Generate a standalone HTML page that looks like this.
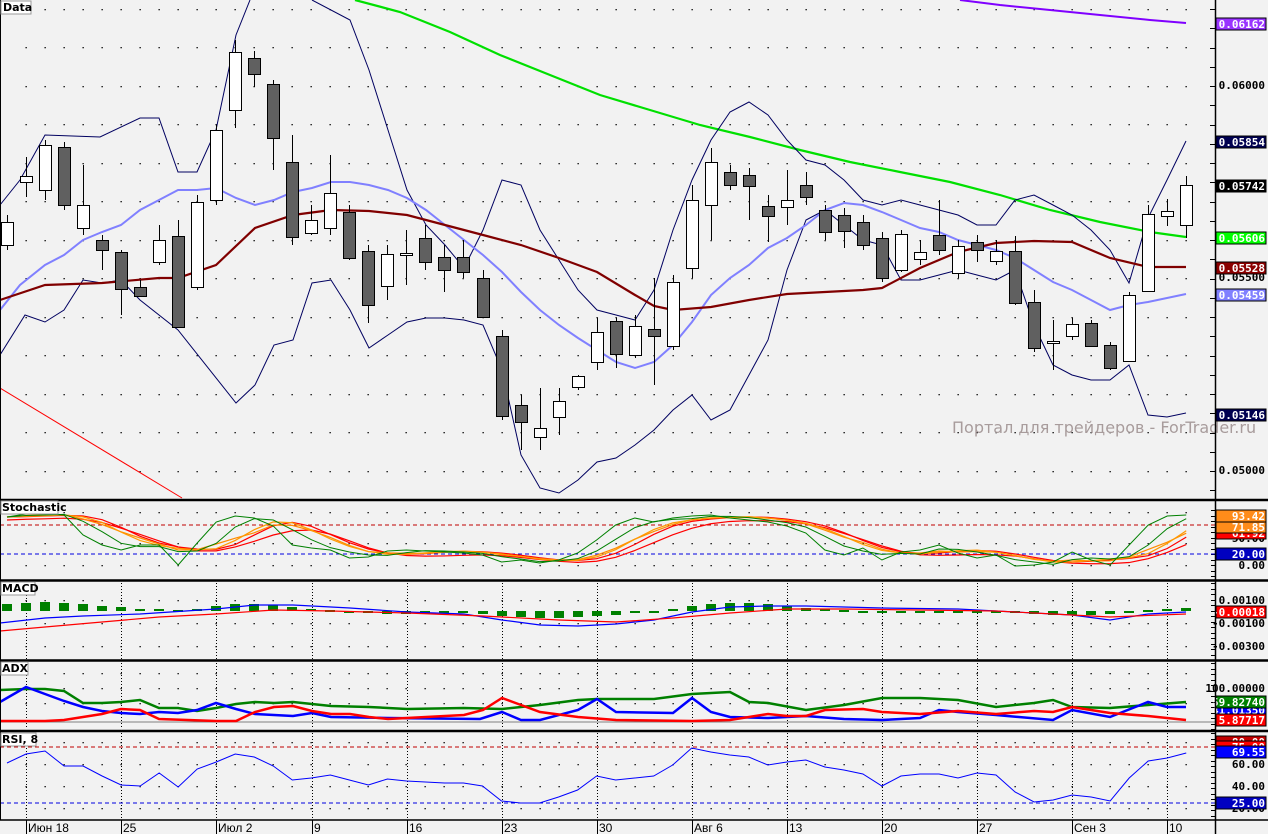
<!DOCTYPE html>
<html><head><meta charset="utf-8"><style>
html,body{margin:0;padding:0;background:#f2f2f2;}
svg{display:block;}
.lb{font-family:"DejaVu Sans Mono","Liberation Mono",monospace;font-weight:bold;font-size:11px;}
.ax{font-family:"Liberation Sans","DejaVu Sans",sans-serif;font-size:12px;fill:#000;}
.tt{font-family:"DejaVu Sans","Liberation Sans",sans-serif;font-weight:bold;font-size:11px;fill:#000;}
</style></head><body>
<svg id="s" width="1268" height="834" viewBox="0 0 1268 834" xmlns="http://www.w3.org/2000/svg">
<rect width="1268" height="834" fill="#f2f2f2"/>
<g id="g"></g>
<text x="952" y="433" font-family="DejaVu Sans, Liberation Sans, sans-serif" font-size="16" fill="#a89c9c">Портал для трейдеров - ForTrader.ru</text>
<g id="labels"></g>
<g stroke="#000" fill="none">
<line x1="1215.5" y1="0" x2="1215.5" y2="834" stroke-width="1.5"/>
<line x1="0" y1="500" x2="1268" y2="500" stroke-width="2.5"/>
<line x1="0" y1="580.5" x2="1268" y2="580.5" stroke-width="2.5"/>
<line x1="0" y1="660.5" x2="1268" y2="660.5" stroke-width="2.5"/>
<line x1="0" y1="731" x2="1268" y2="731" stroke-width="2.5"/>
<line x1="0" y1="820" x2="1268" y2="820" stroke-width="1.5"/>
<line x1="0.5" y1="0" x2="0.5" y2="820"/>
</g>
<g>
<rect x="1" y="1" width="30" height="13" fill="#fff" stroke="#999"/><text class="tt" x="3" y="11">Data</text>
<rect x="1" y="501" width="57" height="13" fill="#fff" stroke="#999"/><text class="tt" x="2" y="511">Stochastic</text>
<rect x="1" y="582" width="34" height="13" fill="#fff" stroke="#999"/><text class="tt" x="2" y="592">MACD</text>
<rect x="1" y="662" width="27" height="13" fill="#fff" stroke="#999"/><text class="tt" x="2" y="672">ADX</text>
<rect x="1" y="733" width="35" height="13" fill="#fff" stroke="#999"/><text class="tt" x="2" y="743">RSI, 8</text>
</g>
<g class="ax">
<text x="28" y="832">Июн 18</text><text x="123" y="832">25</text><text x="218" y="832">Июл 2</text><text x="314" y="832">9</text>
<text x="409" y="832">16</text><text x="504" y="832">23</text><text x="599" y="832">30</text><text x="694" y="832">Авг 6</text>
<text x="789" y="832">13</text><text x="884" y="832">20</text><text x="979" y="832">27</text><text x="1074" y="832">Сен 3</text><text x="1169" y="832">10</text>
</g>
<g stroke="#000"><line x1="26.5" y1="820" x2="26.5" y2="834"/><line x1="121.5" y1="820" x2="121.5" y2="834"/><line x1="216.5" y1="820" x2="216.5" y2="834"/><line x1="312.5" y1="820" x2="312.5" y2="834"/><line x1="407.5" y1="820" x2="407.5" y2="834"/><line x1="502.5" y1="820" x2="502.5" y2="834"/><line x1="597.5" y1="820" x2="597.5" y2="834"/><line x1="692.5" y1="820" x2="692.5" y2="834"/><line x1="787.5" y1="820" x2="787.5" y2="834"/><line x1="882.5" y1="820" x2="882.5" y2="834"/><line x1="977.5" y1="820" x2="977.5" y2="834"/><line x1="1072.5" y1="820" x2="1072.5" y2="834"/><line x1="1167.5" y1="820" x2="1167.5" y2="834"/></g>
</svg>
<script>
(function(){
var NS="http://www.w3.org/2000/svg",g=document.getElementById('g'),L=document.getElementById('labels');
function el(t,a,p){var e=document.createElementNS(NS,t);for(var k in a)e.setAttribute(k,a[k]);(p||g).appendChild(e);return e;}
function X(i){return 7+i*19.02;}
function pl(pts,c,w,d){var s=pts.map(function(p){return p[0]+','+p[1]}).join(' ');var a={points:s,fill:'none',stroke:c,'stroke-width':w||1};if(d)a['stroke-dasharray']=d;el('polyline',a);}
function ser(arr,c,w){pl(arr.map(function(v,i){return [X(i),v]}),c,w);}
function dots(rows){for(var r=0;r<rows.length;r++){for(var i=1;i<63;i++){el('rect',{x:Math.round(X(i))-0.5,y:rows[r],width:1.3,height:1.3,fill:'#000'});}}}
var mr=[];for(var y=8.5;y<500;y+=38.5)mr.push(Math.round(y));dots(mr);
dots([512,543,565]);dots([600,623,646]);dots([673,688,703]);dots([742,764,786,808]);
[26,121,216,312,407,502,597,692,787,882,977,1072,1167].forEach(function(x){
 [[583,659],[663,729],[733,818]].forEach(function(r){el('line',{x1:x+.5,y1:r[0],x2:x+.5,y2:r[1],stroke:'#000','stroke-dasharray':'1,2'});});});
for(var y=9;y<500;y+=19.25)el('line',{x1:1210,y1:Math.round(y)+.5,x2:1215,y2:Math.round(y)+.5,stroke:'#000'});
[[510,580],[583,660],[663,730],[733,820]].forEach(function(r){for(var y=r[0];y<r[1];y+=5.5)el('line',{x1:1211,y1:Math.round(y)+.5,x2:1215,y2:Math.round(y)+.5,stroke:'#000'});});
pl([[0,388],[182,498]],'#ff0000',1);
pl([[355,0],[400,12],[450,32],[500,55],[550,75],[600,95],[650,110],[700,125],[750,137],[800,150],[850,162],[900,172],[950,182],[1000,195],[1050,210],[1100,222],[1150,232],[1186,237]],'#00e000',2.2);
pl([[960,0],[1000,5],[1050,10],[1100,15],[1150,20],[1186,23]],'#8000ff',2);
pl([[0,205],[20,180],[45,135],[100,137],[140,118],[159,118],[178,172],[197,172],[216,130],[236,35],[250,0]],'#000060',1);
pl([[312,0],[350,20],[369,70],[388,130],[407,190],[426,225],[445,245],[464,268],[483,230],[502,180],[521,185],[540,230],[559,260],[578,290],[597,310],[616,315],[635,320],[654,290],[673,230],[692,180],[711,140],[730,112],[749,102],[768,115],[787,140],[806,160],[825,165],[844,180],[863,200],[882,205],[901,200],[920,205],[939,210],[958,215],[977,225],[996,225],[1015,200],[1034,195],[1053,205],[1072,215],[1091,230],[1110,250],[1129,283],[1148,218],[1167,180],[1186,141]],'#000060',1);
pl([[0,355],[25,315],[45,322],[64,310],[83,280],[102,283],[121,280],[140,300],[178,330],[236,403],[255,385],[274,345],[293,340],[312,283],[331,280],[350,310],[369,348],[388,335],[407,322],[426,318],[445,318],[464,320],[483,325],[502,370],[521,455],[540,488],[559,493],[578,480],[597,462],[616,458],[635,445],[654,430],[673,410],[692,395],[711,420],[730,410],[749,375],[768,340],[787,270],[806,220],[825,210],[844,225],[863,240],[882,245],[901,280],[920,280],[939,275],[958,270],[977,275],[996,280],[1015,270],[1034,325],[1053,365],[1072,375],[1091,380],[1110,380],[1129,365],[1148,415],[1167,417],[1186,413]],'#000060',1);
pl([[0,310],[20,285],[45,265],[64,255],[83,240],[102,232],[121,225],[140,210],[159,200],[178,190],[197,190],[216,188],[236,198],[255,205],[274,200],[293,192],[312,188],[331,182],[350,182],[369,185],[388,190],[407,198],[426,210],[445,225],[464,240],[483,255],[502,272],[521,292],[540,310],[559,325],[578,338],[597,350],[616,362],[635,368],[654,362],[673,345],[692,322],[711,295],[730,278],[749,265],[768,248],[787,238],[806,225],[825,210],[844,203],[863,205],[882,212],[901,220],[920,228],[939,232],[958,240],[977,245],[996,250],[1015,258],[1034,270],[1053,282],[1072,290],[1091,300],[1110,310],[1129,305],[1148,302],[1167,298],[1186,294]],'#8080ff',2);
pl([[0,300],[45,285],[102,283],[159,278],[178,278],[216,265],[255,228],[293,215],[331,210],[369,211],[407,215],[445,225],[483,235],[521,245],[559,258],[597,272],[635,295],[654,306],[673,310],[711,307],[749,300],[787,294],[825,292],[863,290],[882,288],[920,268],[958,252],[996,243],[1034,241],[1072,242],[1110,258],[1148,267],[1186,267]],'#800000',2.2);
var C=[[222,245,215,250,1],[176,182,157,197,1],[145,190,140,200,1],[147,205,142,210,0],[205,228,165,235,1],[240,250,235,270,0],[252,289,250,315,0],[287,296,280,297,0],[240,262,225,265,1],[236,327,220,328,0],[202,287,195,290,1],[130,200,125,205,1],[52,110,40,128,1],[58,74,51,87,0],[84,138,80,170,0],[162,237,135,245,0],[220,233,205,235,1],[193,228,155,235,1],[212,258,205,260,0],[251,305,245,323,0],[254,286,245,300,1],[253,255,230,285,1],[238,262,225,270,0],[257,270,245,292,0],[257,272,240,278,0],[278,317,270,318,0],[336,416,330,420,0],[405,422,395,450,0],[428,437,388,450,1],[401,417,388,435,1],[376,387,375,390,1],[332,362,318,370,1],[321,354,318,368,0],[326,355,315,358,1],[329,336,278,385,0],[282,346,275,350,1],[200,268,185,278,1],[162,205,148,240,1],[172,185,165,190,0],[175,186,168,220,0],[206,216,195,242,0],[200,207,170,225,1],[185,197,172,205,0],[210,232,205,240,0],[215,231,208,248,0],[222,245,215,250,0],[238,278,232,282,0],[234,270,230,272,1],[252,259,240,265,1],[235,250,200,255,0],[246,273,240,278,1],[242,250,235,262,0],[251,261,240,265,1],[251,303,236,305,0],[302,348,290,352,0],[341,343,320,370,1],[324,336,318,340,1],[323,346,320,347,0],[345,368,342,370,0],[295,361,292,362,1],[214,291,205,292,1],[211,216,199,226,1],[185,225,176,238,1]];
C.forEach(function(c,i){var x=Math.round(X(i));el('line',{x1:x+.5,y1:c[2],x2:x+.5,y2:c[3],stroke:'#000'});
 el('rect',{x:x-5.5,y:c[0]+.5,width:12,height:Math.max(1,c[1]-c[0]),fill:c[4]?'#fff':'#606060',stroke:'#000'});});
pl([[0,525],[1215,525]],'#c00000',1,'4,3');pl([[0,554],[1215,554]],'#0000e0',1,'4,3');
var K=[517,514,514,515,535,545,550,545,545,565,543,522,516,518,526,545,548,550,558,557,551,550,551,552,553,555,562,560,563,560,553,540,525,518,522,518,516,515,518,520,522,526,533,550,555,548,560,552,550,545,553,558,555,566,565,562,552,560,565,545,525,516,515];
function sm(a,n){return a.map(function(v,i){var s=0,c=0;for(var j=Math.max(0,i-n+1);j<=i;j++){s+=a[j];c++;}return s/c;});}
var D1=sm(K,3),O1=sm(D1,3),O2=sm(K,5),R1=sm(O1,2),R2=sm(O2,3);
ser(R2.map(function(v){return v+3}),'#ff0000',1.2);ser(R1,'#ff0000',1.2);ser(O2,'#ff8c00',1.2);ser(O1,'#ff9900',1.2);ser(D1,'#008000',1);ser(K,'#008000',1);
var H=[-7,-8,-9,-8,-7,-5,-4,-2,-2,-1,-2,-5,-7,-7,-6,-4,-2,-1,1,2,3,3,3,2,2,3,5,6,7,7,6,5,4,2,1,-2,-5,-7,-8,-8,-7,-5,-3,-2,-1,0,0,0,0,0,0,0,1,2,3,4,4,4,3,1,-1,-2,-3];
H.forEach(function(h,i){var x=Math.round(X(i));var y0=611,y1=611+h;el('rect',{x:x-5,y:Math.min(y0,y1),width:10,height:Math.max(2,Math.abs(h)),fill:'#008000'});});
pl([[0,623],[45,618],[83,616],[140,614],[216,609],[255,605],[293,605],[350,608],[407,612],[464,614],[502,620],[540,625],[578,626],[616,624],[654,620],[692,612],[730,607],[768,606],[806,606],[844,607],[882,608],[958,609],[1015,612],[1072,615],[1110,620],[1148,614],[1186,612]],'#0000ff',1.2);
pl([[0,631],[45,627],[102,622],[159,617],[216,614],[274,610],[331,611],[407,613],[483,616],[559,620],[616,622],[673,618],[730,613],[787,609],[844,609],[920,610],[996,611],[1053,614],[1110,617],[1186,614]],'#ff0000',1.2);
pl([[0,722],[1215,722]],'#808080',1);
pl([[0,690],[26,689],[45,689],[64,691],[83,703],[102,703],[121,702],[140,700],[159,708],[178,708],[197,711],[216,708],[236,704],[255,702],[274,703],[293,702],[331,706],[369,707],[407,709],[464,708],[502,709],[540,705],[578,700],[597,699],[654,699],[692,694],[730,692],[749,702],[768,703],[806,710],[844,705],[882,698],[920,698],[958,700],[996,707],[1034,703],[1053,700],[1072,707],[1110,708],[1148,705],[1186,702]],'#008000',2.5);
pl([[0,702],[26,687],[45,694],[64,701],[83,707],[102,711],[121,713],[140,714],[159,712],[178,713],[197,710],[216,703],[236,709],[255,714],[274,715],[293,716],[312,713],[331,717],[388,718],[480,719],[502,712],[521,720],[540,720],[578,710],[597,699],[616,712],[673,713],[692,698],[711,712],[730,717],[768,718],[806,716],[844,719],[882,720],[920,718],[939,710],[958,712],[996,715],[1053,720],[1072,710],[1110,717],[1148,702],[1167,707],[1186,707]],'#0000ff',2.5);
pl([[0,721],[45,721],[64,720],[83,717],[102,714],[121,709],[140,710],[159,719],[216,721],[236,721],[255,712],[274,707],[293,706],[312,711],[331,714],[350,714],[369,717],[388,719],[426,717],[464,715],[483,710],[502,698],[521,705],[540,712],[578,717],[616,720],[692,721],[730,720],[768,714],[787,716],[806,716],[825,710],[863,709],[882,712],[920,714],[958,711],[996,714],[1034,711],[1053,712],[1072,707],[1110,713],[1148,716],[1186,720]],'#ff0000',2.5);
pl([[0,747],[1215,747]],'#c00000',1,'4,3');pl([[0,803],[1215,803]],'#0000e0',1,'4,3');
ser([763,754,751,766,766,776,785,786,773,787,769,762,754,757,766,780,778,775,780,785,779,781,782,783,783,786,801,803,803,797,790,776,780,778,776,765,748,752,755,757,765,762,760,767,770,774,786,776,774,774,778,773,775,792,802,800,795,797,801,778,761,758,753],'#0000ff',1);
function lab(y,txt,bg,fg){if(bg)el('rect',{x:1216,y:y-6,width:50,height:12,fill:bg,stroke:'#000'},L);var t=el('text',{x:1265,y:y+4,'text-anchor':'end','class':'lb',fill:fg||'#fff'},L);t.textContent=txt;}
lab(85,'0.06000',null,'#000');lab(277,'0.05500',null,'#000');lab(470,'0.05000',null,'#000');
lab(24,'0.06162','#9933ff');lab(142,'0.05854','#000050');lab(186,'0.05742','#000');lab(238,'0.05606','#00ff00');lab(268,'0.05528','#8b0000');lab(295,'0.05459','#8080ff');lab(415,'0.05146','#000050');
lab(538,'50.00',null,'#000');lab(533,'61.92','#ff0000');lab(527,'71.85','#ff8c1a');lab(516,'93.42','#ff8c1a');lab(554,'20.00','#0000c0');lab(565,'0.00',null,'#000');
lab(600,'0.00100',null,'#000');lab(623,'-0.00100',null,'#000');lab(612,'-0.00018','#ff0000');lab(646,'-0.00300',null,'#000');
lab(688,'100.00000',null,'#000');lab(710,'41.01350','#0000ff');lab(702,'59.82740','#008000');lab(720,'5.87717','#ff0000');
lab(742,'80.00','#c00000');lab(747,'75.00','#ff0000');lab(752,'69.55','#0000ff');lab(764,'60.00',null,'#000');lab(786,'40.00',null,'#000');lab(808,'20.00',null,'#000');lab(803,'25.00','#0000c0');
})();
</script>
</body></html>
